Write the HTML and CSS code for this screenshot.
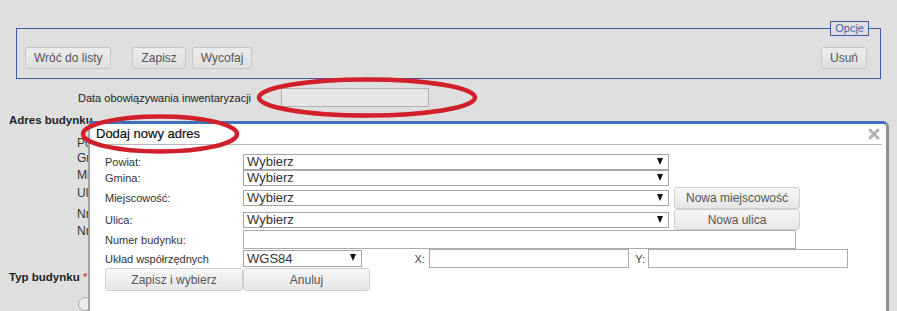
FILE: index.html
```html
<!DOCTYPE html>
<html lang="pl">
<head>
  <meta charset="UTF-8">
  <meta name="viewport" content="width=device-width, initial-scale=1.0">
  <title>Budynek - edycja</title>
  <link rel="stylesheet" href="styles.css">
</head>
<body>
  <div class="page">
    <fieldset class="options">
      <legend>Opcje</legend>
      <div class="options-row">
        <button class="btn">Wróć do listy</button>
        <button class="btn btn-save">Zapisz</button>
        <button class="btn btn-undo">Wycofaj</button>
        <button class="btn btn-delete">Usuń</button>
      </div>
    </fieldset>

    <div class="date-row">
      <label>Data obowiązywania inwentaryzacji</label>
      <input type="text" class="date-input" disabled>
    </div>

    <div class="section-title">Adres budynku</div>
    <div class="addr">
      <div class="addr-row">Powiat:</div>
      <div class="addr-row">Gmina:</div>
      <div class="addr-row">Miejscowość:</div>
      <div class="addr-row">Ulica:</div>
      <div class="addr-row nr">Nr budynku:</div>
      <div class="addr-row nr">Nr lokalu:</div>
    </div>

    <div class="section-title typ">Typ budynku <span class="req">*</span></div>
    <div class="radio-row"><span class="radio"></span></div>
  </div>

  <!-- okno dialogowe -->
  <div class="dialog">
    <div class="dialog-title">Dodaj nowy adres</div>
    <svg class="dialog-close" width="12" height="12" viewBox="0 0 12 12">
      <path d="M2 2 L10 10 M10 2 L2 10" stroke="#b3b3b3" stroke-width="3" stroke-linecap="round"/>
    </svg>

    <div class="form">
      <label>Powiat:</label>
      <div class="sel"><span class="sel-value">Wybierz</span></div>
      <div></div>

      <label>Gmina:</label>
      <div class="sel"><span class="sel-value">Wybierz</span></div>
      <div></div>

      <label>Miejscowość:</label>
      <div class="sel"><span class="sel-value">Wybierz</span></div>
      <button class="btn btn-light btn-side">Nowa miejscowość</button>

      <label>Ulica:</label>
      <div class="sel"><span class="sel-value">Wybierz</span></div>
      <button class="btn btn-light btn-side short">Nowa ulica</button>

      <label>Numer budynku:</label>
      <input type="text" class="txt txt-wide">

      <label>Układ współrzędnych</label>
      <div class="coords">
        <div class="sel sel-small"><span class="sel-value">WGS84</span></div>
        <span class="coord-label x">X:</span>
        <input type="text" class="txt txt-coord">
        <span class="coord-label y">Y:</span>
        <input type="text" class="txt txt-coord">
      </div>

      <button class="btn btn-light btn-submit">Zapisz i wybierz</button>
      <button class="btn btn-light btn-cancel">Anuluj</button>
    </div>
  </div>

  <svg class="marks" width="897" height="311" viewBox="0 0 897 311">
    <ellipse cx="367" cy="97.5" rx="108" ry="18" fill="none" stroke="#d11f2c" stroke-width="4.5"/>
    <ellipse cx="160" cy="134" rx="77" ry="17.5" fill="none" stroke="#d11f2c" stroke-width="4.5"/>
  </svg>
</body>
</html>
```

FILE: styles.css
```css
html, body {
  height: 100%;
  overflow: hidden;
}
body {
  margin: 0;
  background: #dfdfdf;
  font-family: "Liberation Sans", Arial, sans-serif;
  color: #222;
  position: relative;
}
.page {
  padding: 0 16px;
}

/* opcje */
.options {
  margin: 21px 0 0;
  padding: 11px 11px 9px 8px;
  border: 1px solid #3d5aa4;
  min-width: 0;
}
.options legend {
  margin-left: auto;
  margin-right: 0;
  padding: 0 4px;
  border: 1px solid #3d5aa4;
  font-size: 11px;
  line-height: 13px;
  color: #4662a8;
  background: #dfdfdf;
}
.options-row {
  display: flex;
}
.btn {
  font-family: "Liberation Sans", Arial, sans-serif;
  font-size: 12px;
  font-weight: normal;
  color: #555;
  height: 22px;
  padding: 0 8px;
  background: linear-gradient(#ececec, #e0e0e0);
  border: 1px solid #c6c6c6;
  border-radius: 3px;
}
.btn-save {
  margin-left: 21px;
}
.btn-undo {
  margin-left: 6px;
}
.btn-delete {
  margin-left: auto;
  margin-right: 2px;
}

/* data */
.date-row {
  display: flex;
  align-items: center;
  margin-top: 9px;
  padding-left: 62px;
  font-size: 11px;
  color: #222;
}
.date-row label {
  width: 203px;
}
.date-input {
  width: 148px;
  height: 19px;
  box-sizing: border-box;
  border: 1px solid #b0b0b0;
  background: #e6e6e6;
  margin: 0;
}

.section-title {
  margin: 6px 0 0 -7px;
  font-size: 11.5px;
  line-height: 15px;
  font-weight: bold;
  color: #222;
}
.section-title.typ {
  margin-top: 30px;
}
.req {
  color: #d22;
  font-weight: normal;
}
.addr {
  margin-top: 7px;
  padding-left: 61px;
  font-size: 12px;
  color: #333;
}
.addr-row {
  height: 18px;
  line-height: 18px;
}
.addr-row:nth-child(1) { height: 16px; line-height: 16px; }
.addr-row:nth-child(2) { height: 15px; line-height: 15px; }
.addr-row.nr { height: 22px; line-height: 24px; }
.addr-row.nr + .nr { height: 16px; line-height: 14px; }
.radio-row {
  margin-top: 12px;
  padding-left: 62px;
}
.radio {
  display: block;
  width: 12px;
  height: 12px;
  border: 1px solid #a8a8a8;
  border-radius: 50%;
  background: #ececec;
}

/* dialog */
.dialog {
  position: absolute;
  left: 88px;
  top: 121px;
  width: 796px;
  height: 190px;
  background: #fff;
  border-top: 3px solid #3f72bd;
  border-left: 2px solid #a3a3a3;
  border-right: 3px solid #8d8d8d;
  border-top-right-radius: 6px;
  z-index: 5;
}
.dialog-title {
  margin: 0 4px;
  padding-left: 2px;
  height: 20px;
  line-height: 20px;
  font-size: 13px;
  color: #111;
  -webkit-text-stroke: 0.2px #111;
  border-bottom: 1px solid #b8b8b8;
}
.dialog-close {
  position: absolute;
  right: 6px;
  top: 4px;
}
.form {
  display: grid;
  grid-template-columns: 138px 426px 131px;
  grid-template-rows: 17px 16px 23px 21px 19px 19px 23px;
  align-items: center;
  padding: 8px 0 0 15px;
  font-size: 11px;
  color: #333;
}
.sel {
  position: relative;
  box-sizing: border-box;
  height: 16px;
  border: 1px solid #a5a5a5;
  background: #fff;
  padding-left: 3px;
  font-size: 13px;
  line-height: 14px;
  color: #333;
  overflow: hidden;
}
.sel::after {
  content: "";
  position: absolute;
  right: 5px;
  top: 3px;
  border-left: 3.5px solid transparent;
  border-right: 3.5px solid transparent;
  border-top: 7px solid #111;
}
.sel-small {
  flex-shrink: 0;
  width: 119px;
  height: 17px;
  line-height: 15px;
}
.btn-light {
  color: #555;
  background: linear-gradient(#f7f7f7, #e6e6e6);
  border-color: #d0d0d0;
}
.btn-side {
  margin-left: 5px;
  width: 126px;
  height: 22px;
}
.btn-side.short {
  height: 21px;
}
.txt {
  box-sizing: border-box;
  height: 19px;
  margin: 0;
  border: 1px solid #ababab;
  background: #fff;
}
.txt-wide {
  grid-column: 2 / 4;
  width: 553px;
}
.coords {
  grid-column: 2 / 4;
  display: flex;
  align-items: center;
  white-space: nowrap;
}
.coord-label {
  flex-shrink: 0;
  box-sizing: border-box;
  text-align: right;
  font-size: 11px;
  color: #444;
}
.coord-label.x {
  width: 67px;
  padding-right: 4px;
}
.coord-label.y {
  width: 19px;
  padding-right: 3px;
}
.txt-coord {
  flex-shrink: 0;
  width: 200px;
}
.btn-submit {
  width: 138px;
  height: 23px;
}
.btn-cancel {
  justify-self: start;
  width: 127px;
  height: 23px;
}

/* zaznaczenia */
.marks {
  position: absolute;
  left: 0;
  top: 0;
  z-index: 10;
  pointer-events: none;
}
```
